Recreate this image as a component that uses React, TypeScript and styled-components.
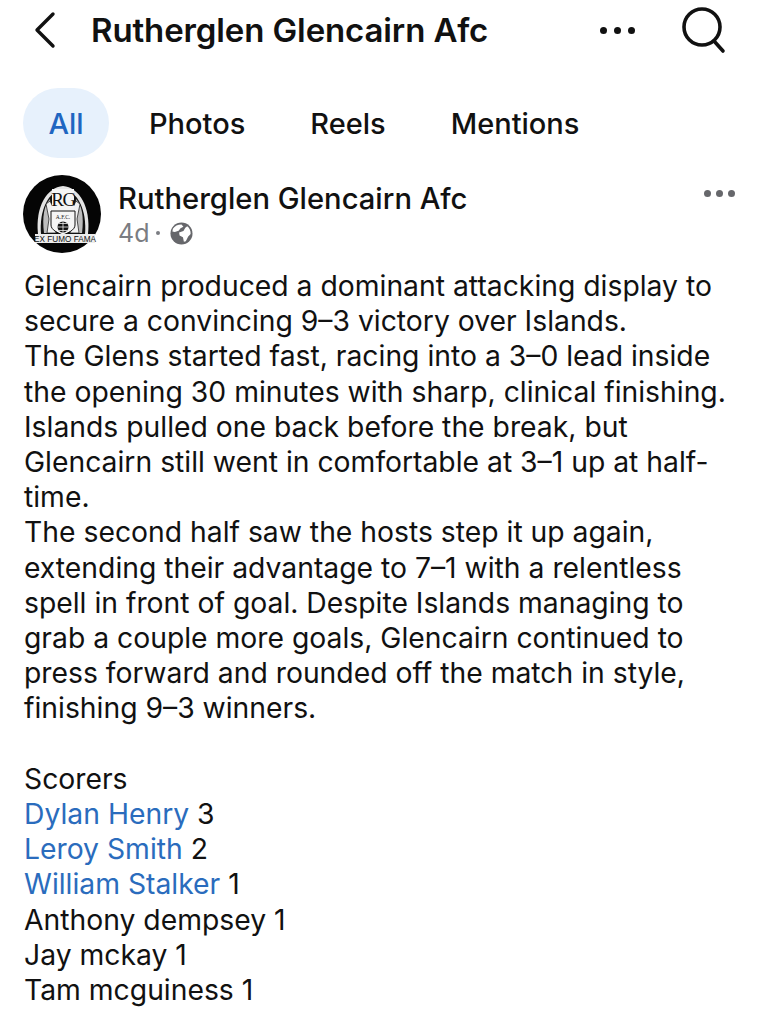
import React from 'react';
import styled, { createGlobalStyle } from 'styled-components';

const GlobalStyle = createGlobalStyle`
  html, body {
    margin: 0;
    padding: 0;
    background: #ffffff;
    font-family: Inter, "Liberation Sans", sans-serif;
    color: #111111;
  }
`;

const tabs = ['All', 'Photos', 'Reels', 'Mentions'];

const App = () => {
  return (
    <Page>
      <GlobalStyle />
      <TopBar>
        <BackButton>
          <svg width="24" height="38" viewBox="0 0 24 38" fill="none">
            <path d="M21 3 L5 19 L21 35" stroke="#111" strokeWidth="3.4" strokeLinecap="round" strokeLinejoin="round" />
          </svg>
        </BackButton>
        <PageTitle>Rutherglen Glencairn Afc</PageTitle>
        <TopActions>
          <Dots $size={7} $gap={7} $color="#111" />
          <svg width="46" height="50" viewBox="0 0 46 50" fill="none">
            <circle cx="21" cy="22" r="18" stroke="#111" strokeWidth="3.6" />
            <path d="M33 36 L42 46" stroke="#111" strokeWidth="3.6" strokeLinecap="round" />
          </svg>
        </TopActions>
      </TopBar>

      <TabRow>
        {tabs.map((t, i) => (
          <Tab key={t} $active={i === 0}>{t}</Tab>
        ))}
      </TabRow>

      <PostHeader>
        <Avatar />
        <PostMeta>
          <AuthorName>Rutherglen Glencairn Afc</AuthorName>
          <MetaLine>
            <span>4d</span>
            <MetaDot />
            <GlobeIcon />
          </MetaLine>
        </PostMeta>
        <PostMenu>
          <Dots $size={7} $gap={5} $color="#66676b" />
        </PostMenu>
      </PostHeader>

      <PostBody>
        <Line>Glencairn produced a dominant attacking display to</Line>
        <Line>secure a convincing 9–3 victory over Islands.</Line>
        <Line>The Glens started fast, racing into a 3–0 lead inside</Line>
        <Line>the opening 30 minutes with sharp, clinical finishing.</Line>
        <Line>Islands pulled one back before the break, but</Line>
        <Line>Glencairn still went in comfortable at 3–1 up at half-</Line>
        <Line>time.</Line>
        <Line>The second half saw the hosts step it up again,</Line>
        <Line>extending their advantage to 7–1 with a relentless</Line>
        <Line>spell in front of goal. Despite Islands managing to</Line>
        <Line>grab a couple more goals, Glencairn continued to</Line>
        <Line>press forward and rounded off the match in style,</Line>
        <Line>finishing 9–3 winners.</Line>
        <Line>&nbsp;</Line>
        <Line>Scorers</Line>
        <Line><Mention>Dylan Henry</Mention> 3</Line>
        <Line><Mention>Leroy Smith</Mention> 2</Line>
        <Line><Mention>William Stalker</Mention> 1</Line>
        <Line>Anthony dempsey 1</Line>
        <Line>Jay mckay 1</Line>
        <Line>Tam mcguiness 1</Line>
      </PostBody>
    </Page>
  );
};

const Dots = ({ $size, $gap, $color }: { $size: number; $gap: number; $color: string }) => (
  <DotRow $gap={$gap}>
    {[0, 1, 2].map((n) => (
      <Dot key={n} $size={$size} $color={$color} />
    ))}
  </DotRow>
);

const GlobeIcon = () => (
  <svg width="23" height="23" viewBox="0 0 24 24">
    <circle cx="12" cy="12" r="11.5" fill="#66676b" />
    <path d="M3 7 C5 4 8 2.5 12 2.5 L14 5 L11 6.5 L9 9 L5 10.5 L2.5 10 Z" fill="#fff" />
    <path d="M9.5 11 L14 9.5 L16 6 L18 4.5 C20.5 6.5 21.8 9.5 21.5 12.5 L19 15 L16.5 20 L14.5 20.5 L13.5 16 L10 14 Z" fill="#fff" />
  </svg>
);

// club crest, traced roughly from the reference
const Avatar = () => (
  <svg width="78" height="78" viewBox="0 0 78 78">
    <circle cx="39" cy="39" r="39" fill="#050505" />
    <path d="M15 59 C12 32 24 12 40 11 C56 12 68 32 65 59 Z" fill="#e4e4e4" />
    <path d="M18 59 C16 36 25 16 40 14 C55 16 64 36 62 59 Z" fill="#111" />
    <path d="M21 58 C19 42 21 30 27 24 L29 58 Z" fill="#bdbdbd" />
    <path d="M59 58 C61 42 59 30 53 24 L51 58 Z" fill="#bdbdbd" />
    <path d="M23 29 L27 26 L30 32 L31 44 L33 58 L24 58 L26 44 Z" fill="#f2f2f2" stroke="#111" strokeWidth="0.7" />
    <path d="M57 29 L53 26 L50 32 L49 44 L47 58 L56 58 L54 44 Z" fill="#f2f2f2" stroke="#111" strokeWidth="0.7" />
    <rect x="29" y="14" width="22" height="22" fill="#f5f5f5" />
    <LogoLetters x="40" y="31" textAnchor="middle" fontSize="19" letterSpacing="-1.5" fill="#111">RG</LogoLetters>
    <path d="M28 36 L52 36 L52 50 C52 55 45 58 40 60 C35 58 28 55 28 50 Z" fill="#f5f5f5" stroke="#111" strokeWidth="1" />
    <LogoLetters x="40" y="44" textAnchor="middle" fontSize="5.5" fill="#111">A.F.C.</LogoLetters>
    <circle cx="40" cy="52" r="5.5" fill="#111" />
    <path d="M34.5 52 L45.5 52 M40 46.5 L40 57.5 M36 48.5 L44 48.5 M36 55.5 L44 55.5" stroke="#eee" strokeWidth="0.8" />
    <rect x="12" y="59" width="60" height="9" fill="#ececec" />
    <LogoCaption x="42" y="66.5" textAnchor="middle" fontSize="8.2" fill="#111">EX FUMO FAMA</LogoCaption>
  </svg>
);

export default App;

const Page = styled.div`
  width: 763px;
  height: 1024px;
  overflow: hidden;
  background: #fff;
  display: flex;
  flex-direction: column;
`;

const TopBar = styled.div`
  display: flex;
  align-items: center;
  height: 60px;
  padding: 0 36px 0 32px;
`;

const BackButton = styled.div`
  display: flex;
  width: 24px;
  margin-right: 35px;
`;

const PageTitle = styled.div`
  flex: 1;
  font-size: 33px;
  font-weight: 600;
  letter-spacing: -0.12px;
  line-height: 58px;
  color: #111;
`;

const TopActions = styled.div`
  display: flex;
  align-items: center;
  gap: 46px;
`;

const DotRow = styled.div<{ $gap: number }>`
  display: flex;
  gap: ${(p) => p.$gap}px;
`;

const Dot = styled.span<{ $size: number; $color: string }>`
  display: block;
  width: ${(p) => p.$size}px;
  height: ${(p) => p.$size}px;
  border-radius: 50%;
  background: ${(p) => p.$color};
`;

const TabRow = styled.div`
  display: flex;
  align-items: center;
  gap: 17px;
  margin-top: 28px;
  padding-left: 23px;
  height: 70px;
`;

const Tab = styled.div<{ $active?: boolean }>`
  height: 70px;
  box-sizing: border-box;
  display: flex;
  align-items: center;
  justify-content: center;
  padding: 0 24px;
  font-size: 29px;
  font-weight: 500;
  color: ${(p) => (p.$active ? '#1f66c1' : '#111')};
  ${(p) => p.$active && `
    width: 86px;
    margin-right: -1px;
    padding: 0;
    border-radius: 35px;
    background: #e7f1fc;
  `}
`;

const PostHeader = styled.div`
  position: relative;
  display: flex;
  align-items: center;
  gap: 17px;
  margin-top: 17px;
  padding-left: 23px;
`;

const PostMeta = styled.div`
  display: flex;
  flex-direction: column;
`;

const AuthorName = styled.div`
  font-size: 29.2px;
  font-weight: 500;
  line-height: 38px;
  color: #111;
`;

const MetaLine = styled.div`
  display: flex;
  align-items: center;
  font-size: 25px;
  line-height: 30px;
  color: #7b7d82;
`;

const MetaDot = styled.span`
  width: 4px;
  height: 4px;
  margin: 0 10px 0 7px;
  border-radius: 50%;
  background: #7b7d82;
`;

const PostMenu = styled.div`
  position: absolute;
  top: 15px;
  right: 28px;
`;

const PostBody = styled.div`
  margin-top: 16px;
  padding-left: 24px;
  font-size: 28.3px;
  line-height: 35.2px;
  color: #111;
`;

const Line = styled.div`
  white-space: nowrap;
`;

const Mention = styled.span`
  color: #2a6cbd;
`;

const LogoLetters = styled.text`
  font-family: "Liberation Serif", serif;
`;

const LogoCaption = styled.text`
  font-family: "Liberation Sans", sans-serif;
`;
